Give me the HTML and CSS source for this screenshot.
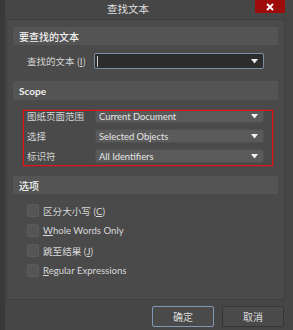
FILE: index.html
```html
<!DOCTYPE html>
<html lang="zh">
<head>
<meta charset="utf-8">
<link rel="stylesheet" href="styles.css">
</head>
<body>
<div class="window">
  <div class="titlebar">
    <span class="title">查找文本</span>
    <span class="close"><svg width="8" height="8" viewBox="0 0 8 8"><path d="M1 1L7 7M7 1L1 7" stroke="#fff" stroke-width="1.8"/></svg></span>
  </div>
  <div class="panel">
    <div class="header">要查找的文本</div>
    <div class="row first-row">
      <span class="label">查找的文本 (<u>I</u>)</span>
      <div class="input">
        <span class="caret"></span>
        <svg class="arrow" width="7" height="5" viewBox="0 0 7 5"><path d="M0 0H7L3.5 4.5Z" fill="#f0f0f0"/></svg>
      </div>
    </div>

    <div class="header bold">Scope</div>
    <div class="scope">
      <div class="row srow">
        <span class="label">图纸页面范围</span>
        <div class="select"><span>Current Document</span><svg class="arrow" width="7" height="5" viewBox="0 0 7 5"><path d="M0 0H7L3.5 4.5Z" fill="#f0f0f0"/></svg></div>
      </div>
      <div class="row srow">
        <span class="label">选择</span>
        <div class="select"><span>Selected Objects</span><svg class="arrow" width="7" height="5" viewBox="0 0 7 5"><path d="M0 0H7L3.5 4.5Z" fill="#f0f0f0"/></svg></div>
      </div>
      <div class="row srow">
        <span class="label">标识符</span>
        <div class="select"><span>All Identifiers</span><svg class="arrow" width="7" height="5" viewBox="0 0 7 5"><path d="M0 0H7L3.5 4.5Z" fill="#f0f0f0"/></svg></div>
      </div>
      <div class="markup"></div>
    </div>

    <div class="header opts">选项</div>
    <div class="options">
      <div class="check"><span class="box"></span><span>区分大小写 (<u>C</u>)</span></div>
      <div class="check"><span class="box"></span><span><u>W</u>hole Words Only</span></div>
      <div class="check"><span class="box"></span><span>跳至结果 (<u>J</u>)</span></div>
      <div class="check"><span class="box"></span><span><u>R</u>egular Expressions</span></div>
    </div>
  </div>
  <div class="buttons">
    <button class="btn default">确定</button>
    <button class="btn">取消</button>
  </div>
</div>
</body>
</html>
```

FILE: styles.css
```css
* { box-sizing: border-box; }
html, body { margin: 0; padding: 0; background: #454545; }
body {
  font-family: "Lato", "Noto Sans CJK SC", sans-serif;
  font-size: 10px;
  color: #d6d6d6;
}
u { text-decoration: underline; text-underline-offset: 1px; }
.window {
  width: 293px;
  height: 330px;
  background: #464646;
  border-left: 5px solid #393939;
  display: flex;
  flex-direction: column;
  overflow: hidden;
}
.titlebar {
  height: 19px;
  display: flex;
  align-items: flex-start;
  position: relative;
}
.title {
  margin-left: 102px;
  margin-top: 1px;
  font-family: "Noto Sans CJK SC", sans-serif;
  font-size: 10.5px;
  line-height: 15px;
  color: #e0e0e0;
}
.close {
  position: absolute;
  left: 250px;
  top: 0;
  width: 30px;
  height: 13px;
  background: #9e0b0b;
  display: flex;
  align-items: center;
  justify-content: center;
}
.panel {
  margin-left: 1px;
  width: 279px;
  height: 281px;
  background: #4a4a4a;
  border: 1px solid #3e3e3e;
  padding: 7px 6px 0 6px;
  display: flex;
  flex-direction: column;
}
.header {
  height: 18px;
  background: #545454;
  padding-left: 6px;
  display: flex;
  align-items: center;
  font-family: "Noto Sans CJK SC", sans-serif;
  font-size: 10px;
  font-weight: 500;
  color: #f0f0f0;
}
.header.bold { font-family: "Lato", sans-serif; font-weight: 700; height: 19px; margin-top: 12px; }
.header.opts { margin-top: 13px; }
.row {
  display: flex;
  align-items: center;
  margin: 0 14px;
}
.first-row { margin-top: 8px; }
.label {
  width: 67px;
  flex: none;
  font-family: "Noto Sans CJK SC", sans-serif;
  font-size: 9.5px;
  color: #d6d6d6;
}
.input {
  flex: 1;
  height: 16px;
  background: #2c2c2c;
  border: 1px solid #7b8fa6;
  border-radius: 2px;
  display: flex;
  align-items: center;
  padding: 0 5px 0 2px;
}
.caret { width: 1px; height: 11px; background: #cfcfcf; }
.arrow { margin-left: auto; flex: none; }
.scope {
  position: relative;
  margin-top: 9px;
  display: flex;
  flex-direction: column;
  gap: 6px;
}
.srow .label { width: 68px; }
.select {
  flex: 1;
  height: 14px;
  background: #5a5a5a;
  border: 1px solid #505050;
  border-radius: 2px;
  display: flex;
  align-items: center;
  padding: 0 5px 0 3px;
  font-size: 9.4px;
  color: #e6e6e6;
}
.markup {
  position: absolute;
  z-index: 2;
  left: 10px;
  right: 5px;
  top: 1px;
  bottom: -3px;
  border: 1px solid #e0141a;
  box-shadow: 0 0 0 0.5px rgba(200, 20, 26, 0.6);
  pointer-events: none;
}
.options {
  margin-top: 10px;
  margin-left: 14px;
  display: flex;
  flex-direction: column;
  gap: 7px;
}
.check {
  display: flex;
  align-items: center;
  gap: 4px;
  height: 13px;
  font-size: 9.6px;
  color: #d8d8d8;
}
.box {
  width: 12px;
  height: 13px;
  background: #555555;
  border: 1px solid #5c5c5c;
  border-radius: 2px;
}
.buttons {
  display: flex;
  justify-content: flex-end;
  gap: 8px;
  padding-right: 9px;
  margin-top: 6px;
}
.btn {
  width: 62px;
  height: 21px;
  background: #4a4a4a;
  border: 1px solid #353535;
  border-radius: 2px;
  color: #dadada;
  font-family: "Noto Sans CJK SC", sans-serif;
  font-size: 10px;
  padding: 0;
}
.btn.default { border-color: #7f98b4; }
```
